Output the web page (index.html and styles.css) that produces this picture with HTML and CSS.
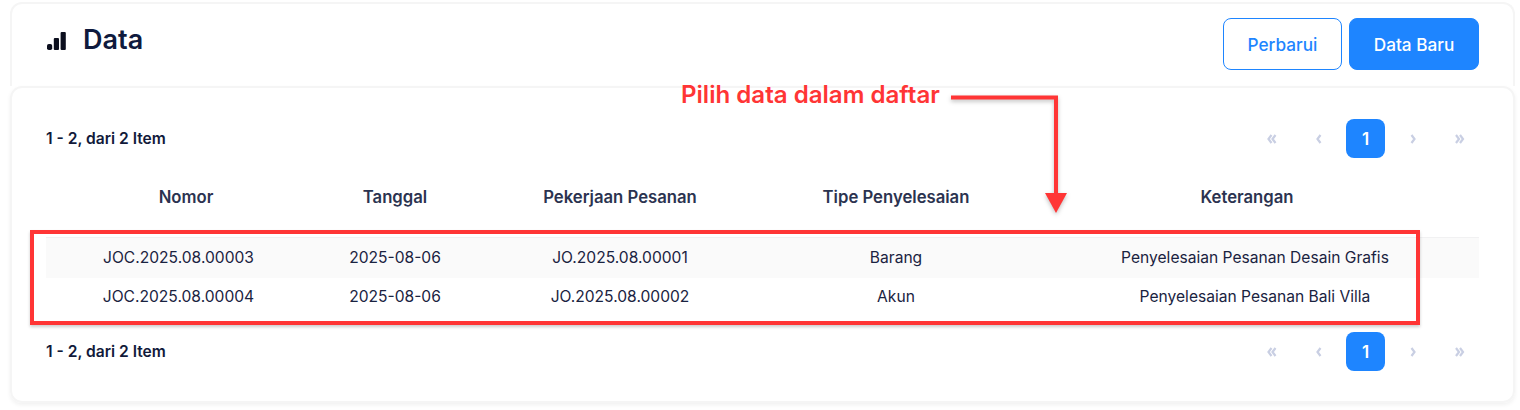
FILE: index.html
```html
<!DOCTYPE html>
<html lang="id">
<head>
<meta charset="utf-8">
<title>Data</title>
<link rel="stylesheet" href="styles.css">
</head>
<body>
<main class="page">
  <header class="head">
    <div class="title">
      <svg class="bars" width="19" height="18" viewBox="0 0 19 18"><rect x="0" y="12" width="5.200" height="6" rx="1.800"/><rect x="6.800" y="6" width="5.200" height="12" rx="1"/><rect x="13.600" y="0" width="5.200" height="18" rx="1"/></svg>
      <h1>Data</h1>
    </div>
    <div class="actions">
      <button class="btn outline">Perbarui</button>
      <button class="btn solid">Data Baru</button>
    </div>
  </header>
  <section class="card">
    <div class="pager-row">
      <span class="count">1 - 2, dari 2 Item</span>
      <nav class="pager">
        <span class="pg"><svg viewBox="0 0 12 12"><path d="M5.500 2 2.500 6l3 4M9.500 2 6.500 6l3 4"/></svg></span>
        <span class="pg"><svg viewBox="0 0 12 12"><path d="M7.500 2 4.500 6l3 4"/></svg></span>
        <span class="cur">1</span>
        <span class="pg"><svg viewBox="0 0 12 12"><path d="M4.500 2 7.500 6l-3 4"/></svg></span>
        <span class="pg"><svg viewBox="0 0 12 12"><path d="M2 2 5 6l-3 4M6 2 9 6l-3 4"/></svg></span>
      </nav>
    </div>
    <div class="table">
      <div class="row th"><span class="first">Nomor</span><span>Tanggal</span><span>Pekerjaan Pesanan</span><span>Tipe Penyelesaian</span><span>Keterangan</span></div>
      <div class="row td odd"><span>JOC.2025.08.00003</span><span>2025-08-06</span><span>JO.2025.08.00001</span><span>Barang</span><span>Penyelesaian Pesanan Desain Grafis</span></div>
      <div class="row td"><span>JOC.2025.08.00004</span><span>2025-08-06</span><span>JO.2025.08.00002</span><span>Akun</span><span>Penyelesaian Pesanan Bali Villa</span></div>
    </div>
    <div class="pager-row bottom">
      <span class="count">1 - 2, dari 2 Item</span>
      <nav class="pager">
        <span class="pg"><svg viewBox="0 0 12 12"><path d="M5.500 2 2.500 6l3 4M9.500 2 6.500 6l3 4"/></svg></span>
        <span class="pg"><svg viewBox="0 0 12 12"><path d="M7.500 2 4.500 6l3 4"/></svg></span>
        <span class="cur">1</span>
        <span class="pg"><svg viewBox="0 0 12 12"><path d="M4.500 2 7.500 6l-3 4"/></svg></span>
        <span class="pg"><svg viewBox="0 0 12 12"><path d="M2 2 5 6l-3 4M6 2 9 6l-3 4"/></svg></span>
      </nav>
    </div>
  </section>
</main>
<div class="note">Pilih data dalam daftar</div>
<svg class="arrow" width="130" height="130" viewBox="0 0 130 130"><path class="arrow-line" d="M1 4.500H106V103"/><path class="arrow-head" d="M95 100H117L106 120Z"/></svg>
<div class="frame"></div>
</body>
</html>
```
FILE: styles.css
```css
* { box-sizing: border-box; }
html, body { margin: 0; height: 410px; overflow: hidden; background: #fff; }
body { font-family: Inter, "Liberation Sans", sans-serif; color: #111a3a; position: relative; }
.page { padding: 2px 5px 0 10px; }
.head {
  height: 84px; padding: 14px 34px 0 35px;
  display: flex; justify-content: space-between; align-items: flex-start;
  border: 2px solid #f5f5f5; border-bottom: 0; border-radius: 12px 12px 0 0;
}
.title { display: flex; align-items: center; gap: 17px; height: 43px; }
.bars { fill: #0c0f1e; margin-top: 2px; }
h1 { margin: 0; font-size: 27px; font-weight: 600; color: #0f1a3d; }
.actions { display: flex; gap: 7px; }
.btn {
  height: 52px; border-radius: 8px; font: 500 17.200px Inter, "Liberation Sans", sans-serif;
  border: 1px solid #1e85ff;
}
.outline { width: 119px; background: #fff; color: #1e85ff; }
.solid { width: 130px; background: #1e85ff; color: #fff; }
.card {
  height: 317px; padding: 31px 34px 0; border-radius: 12px;
  border: 2px solid #f5f5f5; box-shadow: 0 2px 4px rgba(0,0,0,.06);
}
.pager-row { display: flex; justify-content: space-between; align-items: center; height: 39px; }
.count { font-size: 15.600px; font-weight: 600; color: #111a3a; margin-bottom: 1px; }
.pager { display: flex; align-items: center; gap: 8px; }
.pg { width: 39px; height: 39px; display: flex; align-items: center; justify-content: center; }
.pg svg { width: 12px; height: 12px; fill: none; stroke: #c9cfe3; stroke-width: 2.200; }
.cur {
  width: 39px; height: 39px; border-radius: 8px; background: #1e85ff; color: #fff;
  display: flex; align-items: center; justify-content: center; font-size: 17px; font-weight: 600;
}
.table { margin-top: 20px; }
.row { display: grid; text-align: center; align-items: center; }
.th { grid-template-columns: 265px 168px 282px 270px 432px 16px; height: 60px; padding-bottom: 22px; font-size: 16.700px; font-weight: 600; color: #2b3350; border-bottom: 1px solid #f1f1f2; }
.first { padding-left: 15px; }
.td { grid-template-columns: 265px 168px 282px 270px 448px; height: 40px; padding-bottom: 2px; font-size: 15.600px; color: #1a2341; }
.odd { background: #fafafa; }
.td:last-child { height: 39px; }
.bottom { margin-top: 15px; }
.note {
  position: absolute; left: 681px; top: 80px; font-size: 24.100px; line-height: 29px; font-weight: 600; color: #ff3535;
}
.arrow { position: absolute; left: 950px; top: 93px; overflow: visible; filter: drop-shadow(0 2px 2px rgba(0,0,0,.25)); }
.arrow-line { fill: none; stroke: #ff3535; stroke-width: 4; }
.arrow-head { fill: #ff3535; }
.frame {
  position: absolute; left: 30px; top: 230px; width: 1390px; height: 95px;
  border: 4.500px solid #ff3535; box-shadow: 0 2px 3px rgba(0,0,0,.2);
}
```
